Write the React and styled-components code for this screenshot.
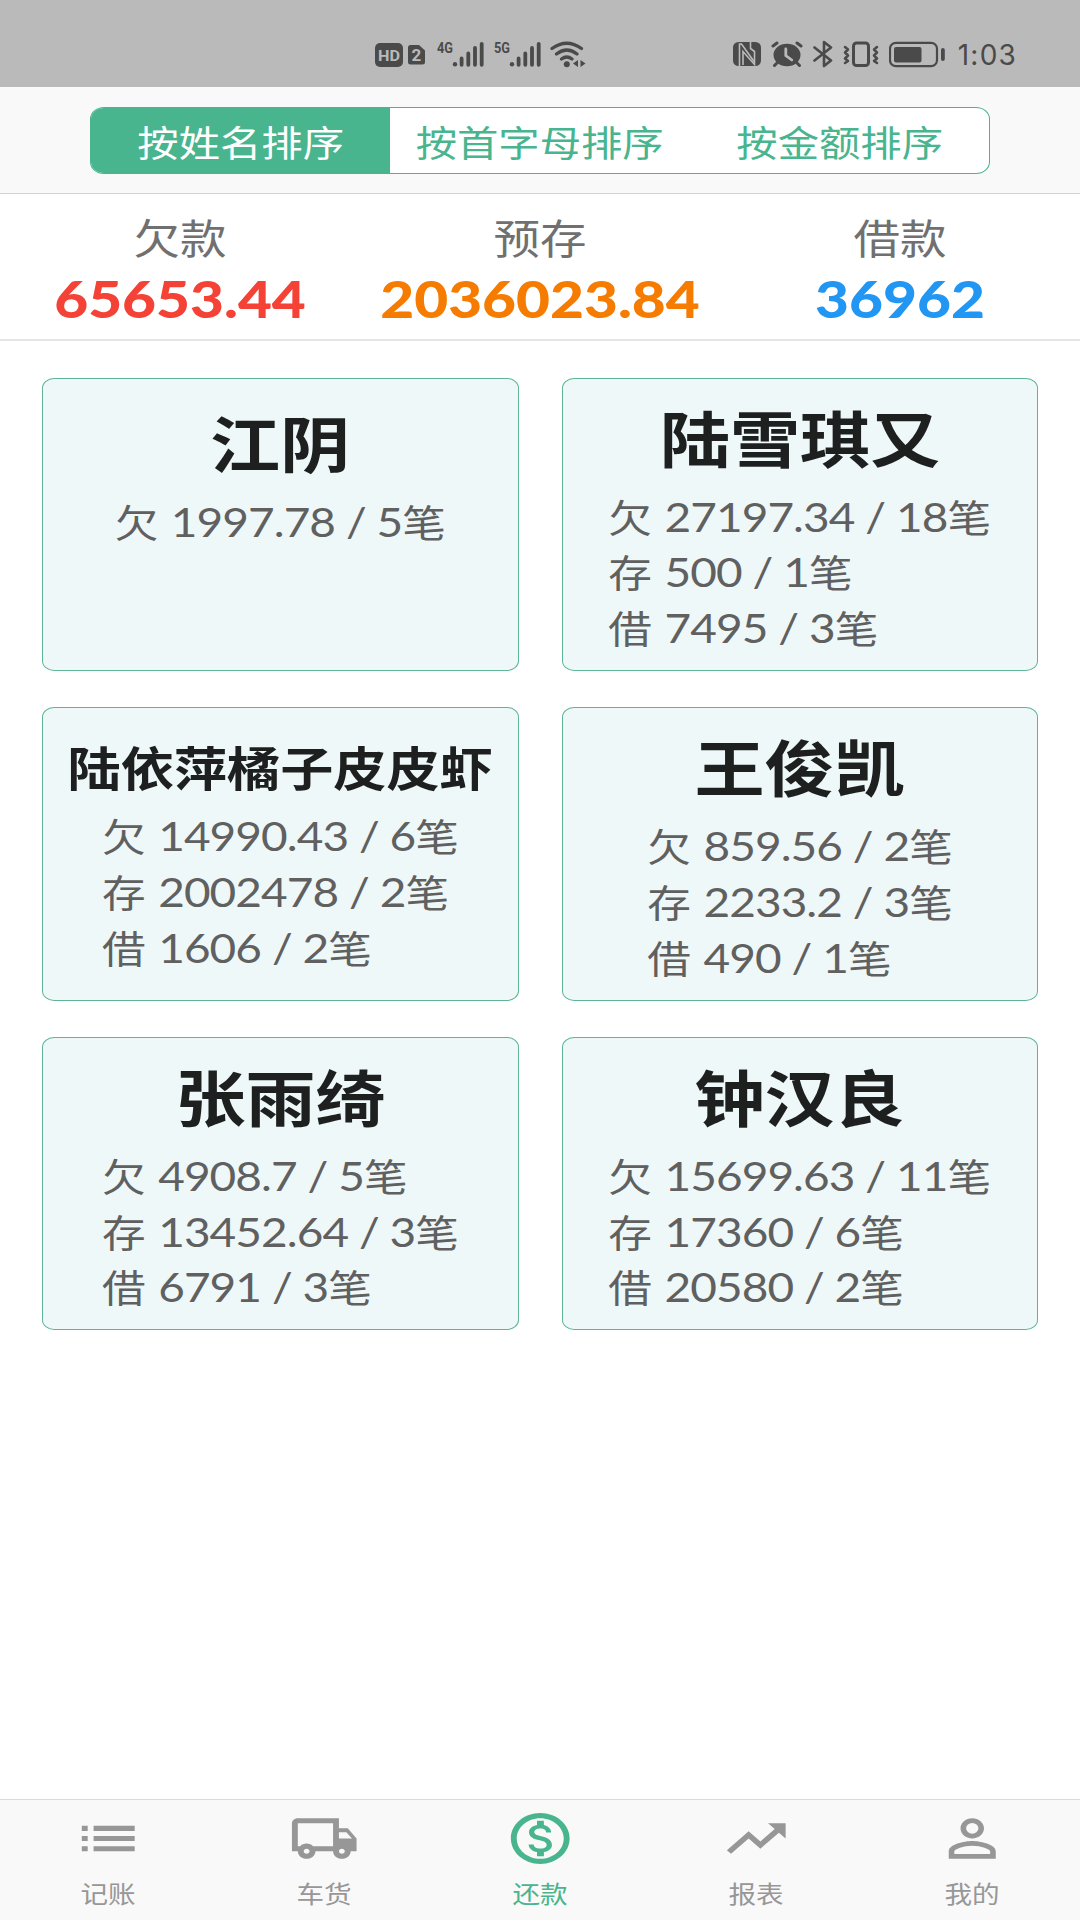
import React from 'react'
import styled, { createGlobalStyle } from 'styled-components'
import {
  MdList,
  MdOutlineLocalShipping,
  MdOutlineMonetizationOn,
  MdTrendingUp,
  MdPersonOutline,
} from 'react-icons/md'

const GlobalStyle = createGlobalStyle`
  * {
    box-sizing: border-box;
  }

  body {
    margin: 0;
    background: #fff;
    font-family: Lato, 'Noto Sans CJK SC', sans-serif;
  }
`

const Page = styled.div`
  width: 1080px;
  height: 1920px;
  display: flex;
  flex-direction: column;
  overflow: hidden;
`

const Wide = styled.span`
  display: block;
  white-space: nowrap;
  transform: scaleX(1.148);
`

const StatusBar = styled.div`
  height: 87px;
  padding: 40px 63px 0 375px;
  background: #bababa;
  display: flex;
  justify-content: space-between;
  align-items: flex-start;
  color: #4a4a4a;
`

const StatusGroup = styled.div`
  display: flex;
  align-items: flex-start;
  gap: ${props => props.$gap}px;

  svg {
    display: block;
  }
`

const Networks = styled(StatusGroup)`
  margin-left: 7px;
`

const Clock = styled.span`
  font: 400 28px/31px Inter, sans-serif;
  letter-spacing: 1.2px;
  margin-left: 3px;
`

const Header = styled.div`
  height: 107px;
  padding-top: 20px;
  background: #f9f9f9;
  border-bottom: 1px solid #d2d2d2;
  display: flex;
  justify-content: center;
  align-items: flex-start;
`

const Segments = styled.div`
  width: 900px;
  height: 67px;
  border: 1px solid #48b58e;
  border-radius: 14px / 12px;
  background: #fff;
  display: flex;
  overflow: hidden;
`

const Segment = styled.button`
  flex: 1;
  border: 0;
  padding: 0;
  background: ${props => (props.$active ? '#48b58e' : 'transparent')};
  color: ${props => (props.$active ? '#fff' : '#48b58e')};
  font: 400 36px/66px 'Noto Sans CJK SC', sans-serif;
`

const Summary = styled.div`
  height: 147px;
  padding-top: 15px;
  border-bottom: 2px solid #e5e5e5;
  display: flex;
`

const SummaryItem = styled.div`
  flex: 1;
  text-align: center;

  .label {
    color: #707070;
    font-size: 40.5px;
    line-height: 60px;
  }

  .amount {
    color: ${props => props.$color};
    font-size: 51px;
    font-weight: 900;
    line-height: 60px;
  }
`

const Grid = styled.div`
  flex: 1;
  padding: 36.5px 42px 0;
  display: grid;
  grid-template-columns: 1fr 1fr;
  grid-auto-rows: 293.5px;
  gap: 36.2px 43px;
`

const Card = styled.div`
  border: 1.5px solid #5fb596;
  border-radius: 12px / 10px;
  background: #eff8f9;
  padding-top: ${props => props.$top}px;
  display: flex;
  flex-direction: column;
  align-items: center;
`

const Name = styled(Wide)`
  color: #1e2020;
  font-size: ${props => (props.$small ? 46.3 : 61)}px;
  font-weight: 700;
  line-height: ${props => (props.$small ? 72 : 88)}px;
`

const Rows = styled(Wide)`
  margin-top: ${props => (props.$small ? 5 : 6)}px;
`

const Row = styled.div`
  color: #606060;
  font-size: 38px;
  line-height: 55.8px;
  height: 55.8px;

  .num {
    font-size: 40px;
    letter-spacing: -0.8px;
    margin-left: 1.5px;
    white-space: pre;
  }
`

const TabBar = styled.div`
  height: 121px;
  padding-top: 8px;
  border-top: 1px solid #dadada;
  background: #f9f9f9;
  display: flex;
`

const Tab = styled.div`
  flex: 1;
  display: flex;
  flex-direction: column;
  align-items: center;
  color: ${props => (props.$active ? '#48b58e' : '#979797')};
  font-size: 24px;
  line-height: 36px;

  svg {
    width: 70.5px;
    height: 61px;
    margin-bottom: 7px;
  }
`

const summary = [
  { label: '欠款', amount: '65653.44', color: '#f44336' },
  { label: '预存', amount: '2036023.84', color: '#f57c00' },
  { label: '借款', amount: '36962', color: '#2196f3' },
]

const people = [
  { name: '江阴', rows: [['欠', '1997.78', 5]] },
  { name: '陆雪琪又', rows: [['欠', '27197.34', 18], ['存', '500', 1], ['借', '7495', 3]] },
  { name: '陆依萍橘子皮皮虾', rows: [['欠', '14990.43', 6], ['存', '2002478', 2], ['借', '1606', 2]] },
  { name: '王俊凯', rows: [['欠', '859.56', 2], ['存', '2233.2', 3], ['借', '490', 1]] },
  { name: '张雨绮', rows: [['欠', '4908.7', 5], ['存', '13452.64', 3], ['借', '6791', 3]] },
  { name: '钟汉良', rows: [['欠', '15699.63', 11], ['存', '17360', 6], ['借', '20580', 2]] },
]

const tabs = [
  { label: '记账', Icon: MdList },
  { label: '车货', Icon: MdOutlineLocalShipping },
  { label: '还款', Icon: MdOutlineMonetizationOn, active: true },
  { label: '报表', Icon: MdTrendingUp },
  { label: '我的', Icon: MdPersonOutline },
]

const HdIcon = () => (
  <svg width="28" height="30" fill="currentColor">
    <rect y="3" width="28" height="24" rx="5" />
    <text x="3" y="20.7" fill="#bababa" fontFamily="Roboto" fontWeight="700" fontSize="15" textLength="22" lengthAdjust="spacingAndGlyphs">HD</text>
  </svg>
)

const SimIcon = () => (
  <svg width="17" height="30" fill="currentColor">
    <path d="M2.500 5h8.500l6 5.500v11.500q0 2.500-2.500 2.500h-12q-2.500 0-2.500-2.500v-14.500q0-2.500 2.500-2.500z" />
    <text x="3.500" y="21" fill="#bababa" fontFamily="Roboto" fontWeight="700" fontSize="17">2</text>
  </svg>
)

const SignalIcon = ({ label }) => (
  <svg width="47" height="30" fill="currentColor">
    <text x="0" y="13" fontFamily="Roboto" fontWeight="700" fontSize="15" textLength="16" lengthAdjust="spacingAndGlyphs">{label}</text>
    <circle cx="18" cy="24.300" r="2.200" />
    <path d="M24.600 18.500v6.300M31.300 13.500v11.300M38 8v16.800M44.700 3.800v21" stroke="currentColor" strokeWidth="3.800" strokeLinecap="round" />
  </svg>
)

const WifiIcon = () => (
  <svg width="36" height="30" fill="none" stroke="currentColor" strokeWidth="3.200" strokeLinecap="round">
    <path d="M2 8.500q14.700-10.500 29.500 0M6.500 14q10.300-8 20.500 0M11.500 19q5.300-4 10.500 0" />
    <circle cx="16.800" cy="24.300" r="3" fill="currentColor" stroke="none" />
    <path d="M28 20v7l-5-3.500zM30.500 20v7l5-3.500z" fill="currentColor" stroke="none" />
  </svg>
)

const NfcIcon = () => (
  <svg width="28" height="30">
    <rect y="2" width="28" height="24" rx="5.500" fill="currentColor" />
    <path d="M6.500 26v-22h2l12.500 17.500" fill="none" stroke="#bababa" strokeWidth="1.600" />
    <path d="M10 25v-13.500l11.500 13v-13l-4-3v-6.500" fill="none" stroke="#bababa" strokeWidth="1.600" />
  </svg>
)

const AlarmIcon = () => (
  <svg width="32" height="30" fill="none" stroke="currentColor" strokeWidth="3" strokeLinecap="round">
    <ellipse cx="16" cy="15" rx="13.500" ry="11.300" fill="currentColor" stroke="none" />
    <path d="M2 6l4-3M30 6l-4-3M6 23l-2.500 2.500M26 23l2.500 2.500" />
    <path d="M14.800 9v6.500l6 4.500" stroke="#bababa" strokeWidth="2.800" />
  </svg>
)

const BluetoothIcon = () => (
  <svg width="20" height="30" fill="none" stroke="currentColor" strokeWidth="2.600" strokeLinecap="round" strokeLinejoin="round">
    <path d="M1.500 7.500l16.500 13-7 5.500v-24l7 5.500-16.500 13" />
  </svg>
)

const VibrateIcon = () => (
  <svg width="36" height="30" fill="none" stroke="currentColor" strokeLinecap="round" strokeLinejoin="round">
    <rect x="10.500" y="3" width="15" height="22.500" rx="3" strokeWidth="3" />
    <path d="M2 7l3 2.500-3 3 3 3-3 3 3 2.500-3 2M34 7l-3 2.500 3 3-3 3 3 3-3 2.500 3 2" strokeWidth="2.500" />
  </svg>
)

const BatteryIcon = () => (
  <svg width="56" height="30">
    <rect x="1" y="2.800" width="47" height="23.400" rx="6" fill="none" stroke="currentColor" strokeWidth="2.200" />
    <rect x="5" y="7" width="27.500" height="15.500" rx="2" fill="currentColor" />
    <rect x="52" y="8" width="3.800" height="13" rx="1.900" fill="currentColor" />
  </svg>
)

class PersonCard extends React.Component {
  // long names get a smaller type size so they stay on one line
  isLong() {
    return this.props.name.length > 6
  }

  getTop() {
    if (this.isLong()) return 24
    return this.props.rows.length === 1 ? 22 : 17
  }

  render() {
    const { name, rows } = this.props
    return (
      <Card $top={this.getTop()}>
        <Name $small={this.isLong()}>{name}</Name>
        <Rows $small={this.isLong()}>
          {rows.map(([kind, amount, count]) => (
            <Row key={kind}>
              {kind}<span className="num">{` ${amount} / ${count}`}</span>笔
            </Row>
          ))}
        </Rows>
      </Card>
    )
  }
}

const App = () => (
  <Page>
    <GlobalStyle />
    <StatusBar>
      <StatusGroup $gap={5}>
        <HdIcon />
        <SimIcon />
        <Networks $gap={9.5}>
          <SignalIcon label="4G" />
          <SignalIcon label="5G" />
          <WifiIcon />
        </Networks>
      </StatusGroup>
      <StatusGroup $gap={10}>
        <NfcIcon />
        <AlarmIcon />
        <BluetoothIcon />
        <VibrateIcon />
        <BatteryIcon />
        <Clock>1:03</Clock>
      </StatusGroup>
    </StatusBar>
    <Header>
      <Segments>
        <Segment $active><Wide>按姓名排序</Wide></Segment>
        <Segment><Wide>按首字母排序</Wide></Segment>
        <Segment><Wide>按金额排序</Wide></Segment>
      </Segments>
    </Header>
    <Summary>
      {summary.map(item => (
        <SummaryItem key={item.label} $color={item.color}>
          <Wide className="label">{item.label}</Wide>
          <Wide className="amount">{item.amount}</Wide>
        </SummaryItem>
      ))}
    </Summary>
    <Grid>
      {people.map(person => <PersonCard key={person.name} {...person} />)}
    </Grid>
    <TabBar>
      {tabs.map(({ label, Icon, active }) => (
        <Tab key={label} $active={active}>
          <Icon preserveAspectRatio="none" />
          <Wide>{label}</Wide>
        </Tab>
      ))}
    </TabBar>
  </Page>
)

export default App
